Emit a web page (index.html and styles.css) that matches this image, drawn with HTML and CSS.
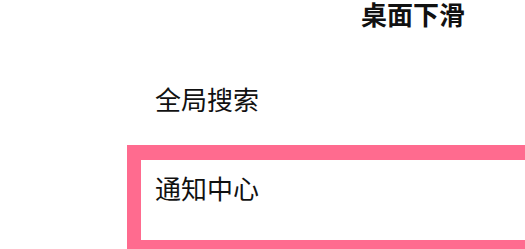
FILE: index.html
```html
<!DOCTYPE html>
<html lang="zh-CN">
<head>
  <meta charset="UTF-8">
  <meta name="viewport" content="width=device-width, initial-scale=1.0">
  <title>桌面下滑</title>
  <link rel="stylesheet" href="styles.css">
</head>
<body>
  <div class="screen">
    <div class="title">桌面下滑</div>

    <div class="option-list">
      <div class="option">全局搜索</div>
      <div class="option selected">通知中心</div>
    </div>
  </div>
</body>
</html>
```

FILE: styles.css
```css
:root {
  --text-dark: #111111;
  --highlight: #ff6b8f;
  --white: #ffffff;
}

body {
  margin: 0;
  padding: 0;
  background: var(--white);
  font-family: "Noto Sans CJK SC", "Noto Sans", sans-serif;
  color: var(--text-dark);
  overflow: hidden;
}

.screen {
  width: 525px;
  height: 249px;
  overflow: hidden;
}

.title {
  padding-left: 361px;
  font-size: 26px;
  line-height: 28px;
  font-weight: 700;
}

.option-list {
  margin-top: 54px;
  margin-left: 127px;
  width: 440px;
}

.option {
  font-size: 26px;
  line-height: 34px;
  padding-left: 28px;
  height: 63px;
}

/* Currently selected entry */
.option.selected {
  border: 14px solid var(--highlight);
  border-top-width: 15px;
  padding-left: 14px;
  padding-top: 11px;
  height: 69px;
  box-sizing: content-box;
}
```
